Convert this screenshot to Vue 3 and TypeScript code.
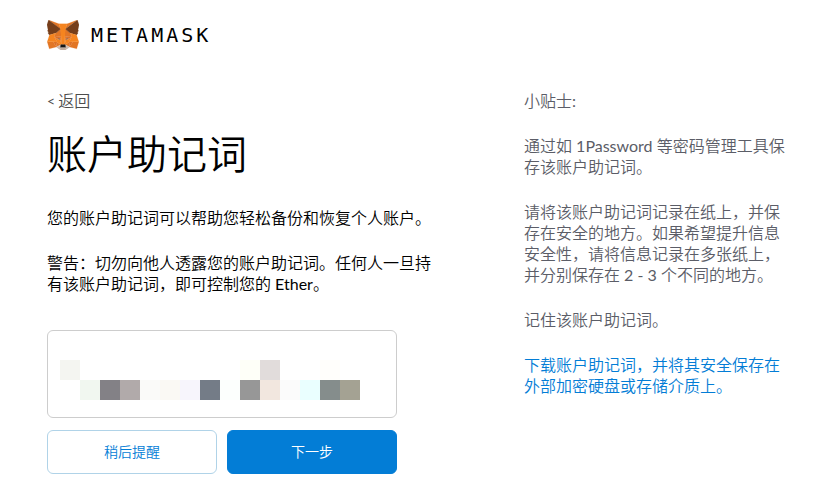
<script setup lang="ts">
interface Facet {
  fill: string
  d: string
}

const foxFacets: Facet[] = [
  { fill: '#e17726', d: 'M32.9582 1L19.8241 10.7183L22.2665 4.991L32.9582 1Z' },
  {
    fill: '#e27625',
    d: 'M2.663 1L15.6809 10.809L13.3546 4.991L2.663 1ZM28.2295 23.5335L24.7346 28.872L32.2175 30.9323L34.3611 23.6501L28.2295 23.5335ZM1.2728 23.6501L3.4034 30.9323L10.8734 28.872L7.3914 23.5335L1.2728 23.6501ZM10.4706 14.5149L8.3926 17.6507L15.7978 17.9875L15.5511 10.0143L10.4706 14.5149ZM25.1505 14.5149L19.9921 9.9236L19.8241 17.9875L27.2292 17.6507L25.1505 14.5149ZM10.8733 28.8721L15.3564 26.7081L11.4967 23.7019L10.8733 28.8721ZM20.2649 26.7081L24.7346 28.8721L24.1245 23.7019L20.2649 26.7081Z',
  },
  {
    fill: '#d5bfb2',
    d: 'M24.7346 28.8721L20.2649 26.7081L20.6288 29.6106L20.5898 30.8418L24.7346 28.8721ZM10.8733 28.8721L15.0314 30.8418L15.0054 29.6106L15.3564 26.7081L10.8733 28.8721Z',
  },
  {
    fill: '#7d5545',
    d: 'M15.1094 21.7842L11.3928 20.6957L14.0176 19.4905L15.1094 21.7842ZM20.5117 21.7842L21.6034 19.4905L24.2412 20.6957L20.5117 21.7842Z',
  },
  {
    fill: '#dc7026',
    d: 'M10.8733 28.8721L11.5229 23.5335L7.3914 23.6501L10.8733 28.8721ZM24.0987 23.5335L24.7346 28.8721L28.2296 23.6501L24.0987 23.5335ZM27.2292 17.6507L19.8241 17.9875L20.5128 21.7842L21.6045 19.4905L24.2423 20.6957L27.2292 17.6507ZM11.3928 20.6957L14.0176 19.4905L15.1094 21.7842L15.7978 17.9875L8.3926 17.6507L11.3928 20.6957Z',
  },
  {
    fill: '#e27525',
    d: 'M8.3926 17.6507L11.4967 23.7019L11.3928 20.6957L8.3926 17.6507ZM24.2412 20.6957L24.1245 23.7019L27.2292 17.6507L24.2412 20.6957ZM15.7978 17.9875L15.1094 21.7842L15.9797 26.267L16.1747 20.3586L15.7978 17.9875ZM19.8241 17.9875L19.4603 20.3457L19.6422 26.267L20.5117 21.7842L19.8241 17.9875Z',
  },
  {
    fill: '#f5841f',
    d: 'M20.5117 21.7842L19.6422 26.267L20.2649 26.7081L24.1245 23.7019L24.2412 20.6957L20.5117 21.7842ZM11.3928 20.6957L11.4967 23.7019L15.3564 26.7081L15.9797 26.267L15.1094 21.7842L11.3928 20.6957Z',
  },
  {
    fill: '#c0ac9d',
    d: 'M20.5898 30.8417L20.6288 29.6106L20.2909 29.3255H15.3304L15.0054 29.6106L15.0314 30.8417L10.8733 28.8721L12.3284 30.0642L15.2784 32.1H20.3299L23.2929 30.0642L24.7346 28.8721L20.5898 30.8417Z',
  },
  {
    fill: '#161616',
    d: 'M20.2649 26.7081L19.6422 26.267H15.9797L15.3564 26.7081L15.0054 29.6106L15.3304 29.3255H20.2909L20.6288 29.6106L20.2649 26.7081Z',
  },
  {
    fill: '#763e1a',
    d: 'M33.5168 11.3532L34.6211 5.9863L32.9582 1L20.2649 10.3944L25.1505 14.5149L32.0486 16.5233L33.5688 14.7482L32.9062 14.2689L33.9588 13.3099L33.1534 12.6879L34.206 11.8845L33.5168 11.3532ZM1 5.9863L2.1168 11.3532L1.4022 11.8845L2.4678 12.6879L1.6622 13.3099L2.7147 14.2689L2.0521 14.7482L3.5724 16.5233L10.4706 14.5149L15.3564 10.3944L2.663 1L1 5.9863Z',
  },
  {
    fill: '#f5841f',
    d: 'M32.0486 16.5233L25.1505 14.5149L27.2292 17.6507L24.1245 23.7019L28.2295 23.65H34.3611L32.0486 16.5233ZM10.4706 14.5149L3.5724 16.5233L1.2728 23.65H7.3914L11.4967 23.7019L8.3926 17.6507L10.4706 14.5149ZM19.8241 17.9875L20.2649 10.3944L22.2665 4.991H13.3546L15.3564 10.3944L15.7978 17.9875L15.9667 20.3716L15.9797 26.267H19.6422L19.6552 20.3716L19.8241 17.9875Z',
  },
]

// Two rows of the mosaic that hides the phrase.
const mosaic: string[][] = [
  ['#f4f5f1', '#fff', '#fff', '#fff', '#fff', '#fff', '#fff', '#fff', '#fff', '#fefff8', '#e1dcdb', '#fff', '#fff', '#fffefb', '#fff'],
  ['#fff', '#f1f7f0', '#838186', '#b1aaaa', '#fafaf9', '#faf9f4', '#f7f5fc', '#747c87', '#fcfffd', '#979797', '#f2e7df', '#fbfbfb', '#eaffff', '#858d8c', '#a4a293'],
]
</script>

<template>
  <div class="page">
    <header class="brand">
      <svg class="fox" viewBox="1 1 33.6 31.1" preserveAspectRatio="none" aria-hidden="true">
        <path v-for="(facet, i) in foxFacets" :key="i" :d="facet.d" :fill="facet.fill" :stroke="facet.fill" stroke-width="0.2" />
      </svg>
      <span class="wordmark">METAMASK</span>
    </header>

    <div class="columns">
      <main class="main">
        <a class="back" href="#"><span class="chevron">&lt;</span>返回</a>
        <h1 class="title">账户助记词</h1>
        <div class="copy">
          <p>您的账户助记词可以帮助您轻松备份和恢复个人账户。</p>
          <p>警告：切勿向他人透露您的账户助记词。任何人一旦持有该账户助记词，即可控制您的 Ether。</p>
        </div>
        <div class="phrase">
          <div v-for="(row, r) in mosaic" :key="r" class="mosaic-row">
            <span v-for="(color, c) in row" :key="c" class="cell" :style="{ background: color }"></span>
          </div>
        </div>
        <div class="actions">
          <button class="button secondary" type="button">稍后提醒</button>
          <button class="button primary" type="button">下一步</button>
        </div>
      </main>

      <aside class="tips">
        <p>小贴士:</p>
        <p>通过如 1Password 等密码管理工具保存该账户助记词。</p>
        <p>请将该账户助记词记录在纸上，并保存在安全的地方。如果希望提升信息安全性，请将信息记录在多张纸上，并分别保存在 2 - 3 个不同的地方。</p>
        <p>记住该账户助记词。</p>
        <p><a class="download" href="#">下载账户助记词，并将其安全保存在外部加密硬盘或存储介质上。</a></p>
      </aside>
    </div>
  </div>
</template>

<style>
body {
  margin: 0;
  background: #fff;
}
</style>

<style scoped>
.page {
  padding: 20px 36px 20px 47px;
  font-family: Lato, "Noto Sans CJK SC DemiLight", "Noto Sans CJK SC", sans-serif;
  font-size: 16px;
  font-weight: 400;
  line-height: 21px;
  color: #000;
}

.brand {
  display: flex;
  align-items: center;
  gap: 12px;
}

.fox {
  width: 32px;
  height: 30px;
}

.wordmark {
  font-family: "DejaVu Sans Mono", monospace;
  font-size: 20px;
  font-weight: 400;
  line-height: 30px;
  letter-spacing: 3px;
  color: #000;
}

.columns {
  display: grid;
  grid-template-columns: minmax(0, 390px) 264px;
  justify-content: space-between;
  column-gap: 24px;
  margin-top: 40px;
}

p {
  margin: 0;
}

.back {
  display: flex;
  align-items: center;
  gap: 3px;
  width: fit-content;
  color: #4d4d4d;
  text-decoration: none;
}

.chevron {
  font-size: 14px;
}

.title {
  margin: 18px 0 28px;
  font-size: 40px;
  font-weight: 350;
  line-height: 50px;
}

.copy,
.tips {
  display: flex;
  flex-direction: column;
  gap: 24px;
}

.tips {
  color: #5b5d67;
}

.phrase {
  box-sizing: border-box;
  max-width: 350px;
  margin-top: 36px;
  padding: 29px 12px 17px;
  border: 1px solid #cdcdcd;
  border-radius: 6px;
}

.mosaic-row {
  display: flex;
}

.cell {
  width: 20px;
  height: 20px;
}

.actions {
  display: grid;
  grid-template-columns: 1fr 1fr;
  gap: 10px;
  max-width: 350px;
  margin-top: 12px;
}

.button {
  height: 44px;
  padding: 0 16px;
  border: 1px solid #037dd6;
  border-radius: 6px;
  font-family: inherit;
  font-size: 14px;
  font-weight: 350;
  line-height: 20px;
  cursor: pointer;
}

.primary {
  background: #037dd6;
  color: #fff;
}

.secondary {
  border-color: #b0d3e8;
  background: #fff;
  color: #037dd6;
}

.download {
  color: #037dd6;
  text-decoration: none;
}
</style>
